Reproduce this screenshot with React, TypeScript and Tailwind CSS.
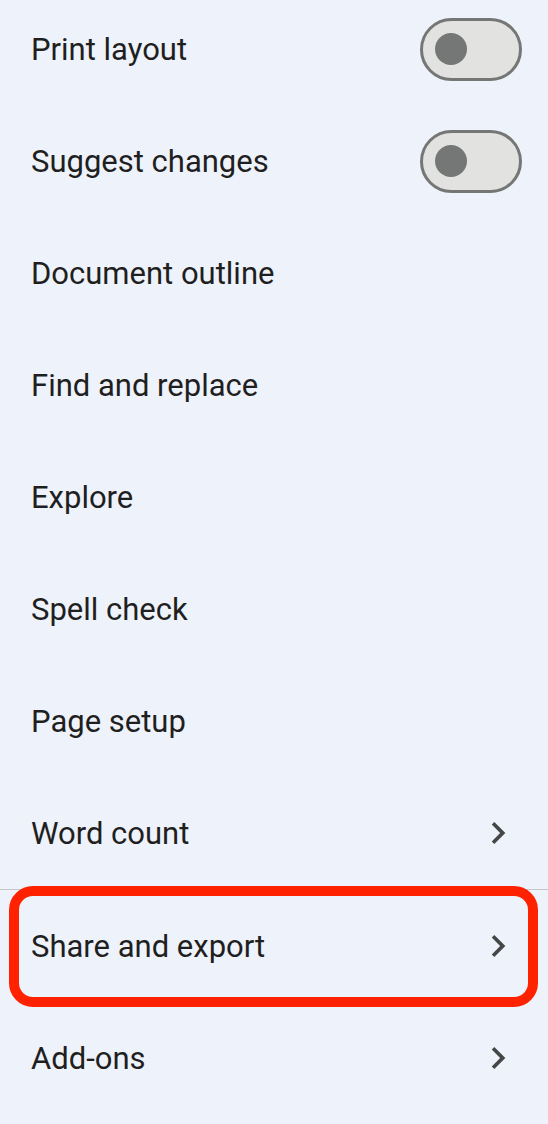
import React from 'react';

type Item = { label: string; kind?: 'toggle' | 'chevron'; divider?: boolean };

const items: Item[] = [
  { label: 'Print layout', kind: 'toggle' },
  { label: 'Suggest changes', kind: 'toggle' },
  { label: 'Document outline' },
  { label: 'Find and replace' },
  { label: 'Explore' },
  { label: 'Spell check' },
  { label: 'Page setup' },
  { label: 'Word count', kind: 'chevron', divider: true },
  { label: 'Share and export', kind: 'chevron' },
  { label: 'Add-ons', kind: 'chevron' },
];

const Toggle = () => (
  <div className="w-[102px] h-[63px] rounded-full border-[3px] border-[#747775] bg-[#e2e3e1] flex items-center pl-[12px]">
    <div className="w-[32px] h-[32px] rounded-full bg-[#747775]" />
  </div>
);

const Chevron = () => (
  <svg width="44" height="44" viewBox="0 0 24 24" className="mr-[28px]">
    <path d="M10 6L8.59 7.41 13.17 12l-4.58 4.59L10 18l6-6z" fill="#444746" />
  </svg>
);

const App: React.FC = () => {
  return (
    <div className="w-[548px] h-[1124px] overflow-hidden bg-[#eef2fa] relative" style={{ fontFamily: 'Roboto, "Noto Sans", sans-serif' }}>
      <div className="-mt-[7px] flex flex-col">
        {items.map((item) => (
          <React.Fragment key={item.label}>
            <div className="h-[112px] flex items-center justify-between pl-[31px]">
              <span className="text-[31px] leading-[40px] pt-[2px] text-[#1f1f1f]">{item.label}</span>
              {item.kind === 'toggle' && (
                <div className="mr-[26px]">
                  <Toggle />
                </div>
              )}
              {item.kind === 'chevron' && <Chevron />}
            </div>
            {item.divider && <div className="h-px bg-[#c4c7c5]" />}
          </React.Fragment>
        ))}
      </div>
      <div className="absolute left-[9px] top-[886px] w-[529px] h-[121px] rounded-[24px] border-[10px] border-[#ff2200]" />
    </div>
  );
};

export default App;
